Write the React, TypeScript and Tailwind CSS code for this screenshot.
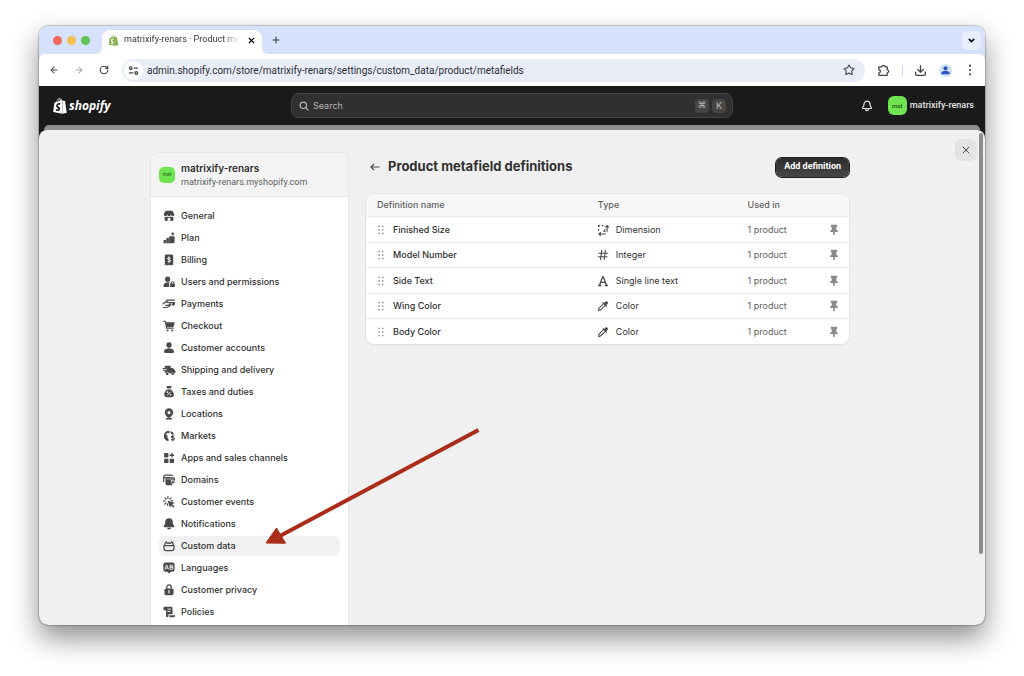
import type { ReactNode } from 'react';
import { ArrowLeft, ArrowRight, ChevronDown, Download, Plus, RotateCw, Star, X } from 'lucide-react';
import { FaShopify } from 'react-icons/fa6';

/* ---------- Icons ---------- */

interface GlyphProps {
  children: ReactNode;
  className?: string;
}

function Glyph({ children, className = 'text-[#4a4a4a]' }: GlyphProps) {
  return (
    <svg viewBox="0 0 20 20" fill="currentColor" aria-hidden="true" className={`size-[14px] shrink-0 ${className}`}>
      {children}
    </svg>
  );
}

const navItems: { label: string; icon: ReactNode }[] = [
  {
    label: 'General',
    icon: (
      <>
        <path d="M5.2 2.500h9.600l2.700 4.700v.8a2.300 2.300 0 0 1-4.700 0 2.200 2.200 0 0 1-1.100 1.600 2.400 2.400 0 0 1-3.200 0 2.200 2.200 0 0 1-1.100-1.600A2.300 2.300 0 0 1 2.500 8v-.8z" />
        <path d="M3.700 11.400c1.400.3 2.800 0 3.700-.7 1.500 1.200 3.700 1.200 5.200 0 .9.700 2.300 1 3.700.7V15a2.300 2.300 0 0 1-2.300 2.300h-2v-2.800a2 2 0 0 0-4 0v2.800H6A2.300 2.300 0 0 1 3.700 15z" />
      </>
    ),
  },
  {
    label: 'Plan',
    icon: (
      <>
        <path d="M2 14.500a1.500 1.500 0 0 1 1.500-1.500H6v-1.500a1.500 1.500 0 0 1 1.500-1.500H10V9a1.500 1.500 0 0 1 1.500-1.500H17a1 1 0 0 1 1 1v7a2 2 0 0 1-2 2H3.500A1.500 1.500 0 0 1 2 16z" />
        <path d="M15.400 1.500l2.600 3h-1.700V6.500h-1.800v-2h-1.700z" />
        <path d="M6.400 13v4.500M10.400 10v7.500" stroke="white" strokeWidth=".4" />
      </>
    ),
  },
  {
    label: 'Billing',
    icon: (
      <>
        <path d="M4 4a2 2 0 0 1 2-2h8a2 2 0 0 1 2 2v14l-2-1.200-2 1.200-2-1.200L8 18l-2-1.200L4 18z" />
        <path d="M12.200 7.600c-.5-.8-1.200-1-2.200-1-1.300 0-2 .6-2 1.400 0 2.100 4.300.9 4.300 3.100 0 .9-.9 1.500-2.200 1.500-1.200 0-2-.4-2.400-1.200M10 5v9.200" fill="none" stroke="white" strokeWidth="1.300" />
      </>
    ),
  },
  {
    label: 'Users and permissions',
    icon: (
      <>
        <circle cx="8" cy="6" r="3.700" />
        <path d="M2 15.500c.4-3.300 2.900-5 6-5 1 0 2 .2 2.800.6-.5.700-.8 1.300-.8 2.100V17H3c-.6 0-1.100-.5-1-1.500z" />
        <path d="M12.900 12.500v-1a2 2 0 0 1 4 0v1" fill="none" stroke="currentColor" strokeWidth="1.500" />
        <rect x="11.300" y="12.200" width="7.200" height="5" rx="1.200" />
      </>
    ),
  },
  {
    label: 'Payments',
    icon: (
      <>
        <path d="M6.500 3.500H17.500a1 1 0 0 1 1 1V5.500H5zM4.300 7H18.500v3.500a1.500 1.500 0 0 1-1.500 1.500h-3.700l1.800-3H9z" />
        <path d="M1.500 9.700C4 7.700 5 6.700 7.500 6.700M1.700 15h4.800c3 0 4.500-1.800 6-4.300M5.200 12h3.300c1.500 0 2.300-.8 3.200-2.300" fill="none" stroke="currentColor" strokeWidth="1.700" strokeLinecap="round" />
      </>
    ),
  },
  {
    label: 'Checkout',
    icon: (
      <>
        <path d="M2 3.200h2c.6 0 .9.3 1 .9l1.500 9h9.300" fill="none" stroke="currentColor" strokeWidth="1.700" strokeLinecap="round" />
        <path d="M5.300 4.600h12c.5 0 .8.400.7.900l-1.200 5c-.1.600-.6 1-1.200 1H6.400z" />
        <circle cx="8" cy="16.500" r="1.400" />
        <circle cx="14.500" cy="16.500" r="1.400" />
      </>
    ),
  },
  {
    label: 'Customer accounts',
    icon: (
      <>
        <circle cx="10" cy="5.700" r="3.800" />
        <path d="M2.900 14.700c.9-2.900 3.600-4.200 7.100-4.200s6.200 1.300 7.100 4.200c.3 1.200-.4 2.300-1.600 2.300h-11c-1.200 0-1.900-1.100-1.600-2.300z" />
      </>
    ),
  },
  {
    label: 'Shipping and delivery',
    icon: (
      <>
        <path d="M4 4h7.500a1 1 0 0 1 1 1v2h2.400c.7 0 1.200.3 1.500.9l.8 1.700 1 .5c.6.3 1 .8 1 1.500v1.800c0 .7-.5 1.200-1.200 1.200h-.4a2.500 2.500 0 0 0-4.600 0H9.800a2.500 2.500 0 0 0-4.900-.2L4 14v-3H1.500V9.800H7V8.500H1V7.200h3z" />
        <circle cx="7.300" cy="15.200" r="1.900" />
        <circle cx="15.300" cy="15.200" r="1.900" />
      </>
    ),
  },
  {
    label: 'Taxes and duties',
    icon: (
      <>
        <path d="M7 1.500h6c.5 0 .8.500.6.900L12.500 5h-5L6.400 2.400c-.2-.4.1-.9.6-.9zM7.500 6.300h5c2.700 1.800 4.500 4.700 4.500 7.700a3.500 3.500 0 0 1-3.500 3.500h-7A3.500 3.500 0 0 1 3 14c0-3 1.800-5.900 4.500-7.700z" />
        <path d="M12.500 9.500l-5 5.200" fill="none" stroke="white" strokeWidth="1.400" />
        <circle cx="7.800" cy="10.200" r="1.100" fill="white" />
        <circle cx="12.200" cy="14" r="1.100" fill="white" />
      </>
    ),
  },
  {
    label: 'Locations',
    icon: (
      <>
        <path fillRule="evenodd" d="M10 1.800a6 6 0 0 1 6 6c0 3.200-2.300 4.800-4.500 7.500h-3C6.300 12.600 4 11 4 7.800a6 6 0 0 1 6-6zm0 3.800a2.300 2.300 0 1 0 0 4.600 2.300 2.300 0 0 0 0-4.600z" />
        <rect x="5.500" y="15.800" width="9" height="2" rx="1" />
      </>
    ),
  },
  {
    label: 'Markets',
    icon: (
      <>
        <path d="M10.500 2.500a7.500 7.500 0 1 0-.8 15c-.7-1-.9-2.200-.4-3.300L7.500 12 8 9.500 5.500 8 8 5.500l2.500.8z" />
        <path d="M12 2.700A7.500 7.500 0 0 1 17.300 8h-2.800L12.300 6z" />
        <path d="M17.300 10.800c-.5-.7-1.200-.9-2-.9-1.200 0-1.900.5-1.900 1.400 0 2 4.300 1 4.300 3 0 1-.9 1.500-2.200 1.500-1.100 0-1.900-.4-2.300-1.100M15.400 8.600v8.900" fill="none" stroke="currentColor" strokeWidth="1.500" />
      </>
    ),
  },
  {
    label: 'Apps and sales channels',
    icon: (
      <>
        <rect x="3" y="3" width="6.200" height="6.200" rx="1.300" />
        <rect x="3" y="11" width="6.200" height="6.200" rx="1.300" />
        <rect x="11" y="11" width="6.200" height="6.200" rx="1.300" />
        <path d="M14.100 2.800v6.600M10.800 6.100h6.600" fill="none" stroke="currentColor" strokeWidth="1.900" />
      </>
    ),
  },
  {
    label: 'Domains',
    icon: (
      <>
        <path d="M2.500 13V5A2 2 0 0 1 4.500 3H13.500a2 2 0 0 1 2 1.500M2.200 6.500h10" fill="none" stroke="currentColor" strokeWidth="1.700" />
        <path d="M5 8A2 2 0 0 1 7 6H16.500a2 2 0 0 1 2 2v3.200l-6-1.700 2 8H7a2 2 0 0 1-2-2z" />
        <path d="M13.500 10.800l5.500 2-2.400 1-1.100 2.700z" />
        <path d="M6.500 8.600H17" stroke="white" strokeWidth=".8" />
      </>
    ),
  },
  {
    label: 'Customer events',
    icon: (
      <>
        <path d="M8.500 2v3M4 4l1.900 1.900M13 4l-1.900 1.900M1.700 8.600h3M4 13.200l1.900-1.900M8 12.500V15M13 8.300h2.300" fill="none" stroke="currentColor" strokeWidth="1.700" strokeLinecap="round" />
        <path d="M8 8l10 3.500-3.400 1.900 3.200 3.200-1.600 1.600-3.200-3.200L11.300 18z" />
      </>
    ),
  },
  {
    label: 'Notifications',
    icon: (
      <>
        <path d="M10 1.800a5.400 5.400 0 0 1 5.400 5.400c0 2.400.5 3.600 1.800 5 .9 1 .4 2.500-.9 2.500H3.700c-1.300 0-1.800-1.500-.9-2.500 1.300-1.400 1.800-2.600 1.800-5A5.400 5.400 0 0 1 10 1.800z" />
        <path d="M7.300 15.500h5.400a2.700 2.500 0 0 1-5.400 0z" />
      </>
    ),
  },
  {
    label: 'Custom data',
    icon: (
      <path
        d="M2.800 9.500h14.400v3.700a3.300 3.300 0 0 1-3.300 3.300H6.100a3.300 3.300 0 0 1-3.300-3.300zM3.200 9.200l1.900-4c.3-.6.8-1 1.500-1 .3 2.800 2.700 2.600 3.400.8.7 1.800 3.100 2 3.400-.8.7 0 1.200.4 1.500 1l1.900 4"
        fill="none"
        stroke="currentColor"
        strokeWidth="1.700"
        strokeLinejoin="round"
      />
    ),
  },
  {
    label: 'Languages',
    icon: (
      <>
        <path d="M2 5a3 3 0 0 1 3-3h10a3 3 0 0 1 3 3v7.500a3 3 0 0 1-3 3h-2.500L10 18l-2.500-2.500H5a3 3 0 0 1-3-3z" />
        <path d="M4.300 12l2.100-6.200h.6l2.100 6.200M5.200 10.200h3M11.500 5.900h2.600a1.400 1.400 0 0 1 0 2.900h-2.600zM11.500 8.800h2.900a1.500 1.500 0 0 1 0 3h-2.900z" fill="none" stroke="white" strokeWidth="1.200" />
      </>
    ),
  },
  {
    label: 'Customer privacy',
    icon: (
      <>
        <path d="M6.800 8.500V6a3.200 3.200 0 0 1 6.400 0v2.500" fill="none" stroke="currentColor" strokeWidth="1.800" />
        <rect x="3.500" y="7.800" width="13" height="9.700" rx="2.500" />
        <path d="M10 10.800v3.400" stroke="white" strokeWidth="1.600" strokeLinecap="round" />
      </>
    ),
  },
  {
    label: 'Policies',
    icon: (
      <>
        <path d="M2 4.500a2 2 0 0 1 2-2H13a2 2 0 0 1 2 2v8.700H9.300v2.600c0 .9-.5 1.700-1.500 1.700-1.400 0-2-.9-2-2.200V7.500H3a1 1 0 0 1-1-1z" />
        <path d="M10.700 14.500h7.800v.8a2.200 2.200 0 0 1-2.200 2.200h-5.600z" />
        <path d="M7.800 6h5M7.800 9.200h4" stroke="white" strokeWidth="1.300" />
      </>
    ),
  },
];

const typeIcons = {
  Dimension: (
    <path
      d="M3.700 6V3.700H6M8.300 3.700h2.400M3.700 8.500v2.400M12.500 9v3h-2M15.800 12.500V4M13.300 6.300l2.500-2.600 2.500 2.600M5 15.700h9M6.800 13.200l-2.500 2.500 2.500 2.500"
      fill="none"
      stroke="currentColor"
      strokeWidth="1.700"
    />
  ),
  Integer: <path d="M8.300 3.500l-1.800 13M13.500 3.500l-1.800 13M4.200 7.500h12.600M3.200 12.500h12.600" fill="none" stroke="currentColor" strokeWidth="1.600" strokeLinecap="round" />,
  'Single line text': (
    <path d="M5 16.200L9.500 4h1L15 16.200M6.500 12h7M3 16.400h4.500M12.500 16.400H17" fill="none" stroke="currentColor" strokeWidth="1.900" />
  ),
  Color: (
    <>
      <path d="M10.500 7L4.700 12.800c-.5.500-.7 1-.7 1.700L3.700 16.300l1.800-.3c.7 0 1.200-.2 1.700-.7L13 9.500" fill="none" stroke="currentColor" strokeWidth="1.600" strokeLinejoin="round" />
      <path d="M9 5.500l1.100-1.100 1.400 1.200 1.500-1.500c1.100-1.100 2.400-1.100 3.400-.1 1 .9 1 2.200 0 3.200l-1.700 1.700 1.300 1.400-1.200 1.200z" />
    </>
  ),
};

type FieldType = keyof typeof typeIcons;

const definitions: { name: string; type: FieldType; usedIn: string }[] = [
  { name: 'Finished Size', type: 'Dimension', usedIn: '1 product' },
  { name: 'Model Number', type: 'Integer', usedIn: '1 product' },
  { name: 'Side Text', type: 'Single line text', usedIn: '1 product' },
  { name: 'Wing Color', type: 'Color', usedIn: '1 product' },
  { name: 'Body Color', type: 'Color', usedIn: '1 product' },
];

/* ---------- Browser chrome ---------- */

function TabStrip() {
  return (
    <div className="flex h-7 shrink-0 items-end bg-[#d6e2fb] pr-1">
      <div className="flex items-center gap-[5px] self-center pl-[14px]">
        <span className="size-[9px] rounded-full bg-[#ed6a5e]" />
        <span className="size-[9px] rounded-full bg-[#f4bf4f]" />
        <span className="size-[9px] rounded-full bg-[#61c554]" />
      </div>
      <div className="relative ml-3 flex h-6 w-40 items-center rounded-t-lg bg-white pb-1 pl-[6px] pr-[6px]">
        <svg viewBox="0 0 6 6" aria-hidden="true" className="absolute bottom-0 -left-[6px] size-[6px] fill-white">
          <path d="M6 0v6H0a6 6 0 0 0 6-6z" />
        </svg>
        <svg viewBox="0 0 6 6" aria-hidden="true" className="absolute bottom-0 -right-[6px] size-[6px] fill-white">
          <path d="M0 0v6h6a6 6 0 0 1-6-6z" />
        </svg>
        <FaShopify className="size-[11px] shrink-0 text-[#7fae42]" />
        <span className="ml-[5px] w-[115px] whitespace-nowrap bg-linear-to-r from-[#303134] from-85% to-white bg-clip-text font-['Roboto',sans-serif] text-[9px] text-transparent">
          matrixify-renars · Product me
        </span>
        <button type="button" aria-label="Close tab" className="ml-auto flex size-[10px] items-center justify-center">
          <X className="size-[9px] shrink-0" strokeWidth={3} />
        </button>
      </div>
      <button type="button" aria-label="New tab" className="ml-[9px] flex size-[10px] items-center justify-center self-center">
        <Plus className="size-[10px] shrink-0 text-[#33373d]" strokeWidth={2.5} />
      </button>
      <button type="button" aria-label="Search tabs" className="ml-auto flex size-[19px] items-center justify-center self-center rounded-md bg-[#e8effc]">
        <ChevronDown className="size-[9px]" strokeWidth={4} />
      </button>
    </div>
  );
}

function Toolbar() {
  return (
    <div className="bg-[#d6e2fb]">
      <div className="flex h-8 items-center rounded-t-md bg-white pr-[9px] pl-[10px] text-[#43474e]">
        <div className="flex items-center gap-[15px]">
          <button type="button" aria-label="Back">
            <ArrowLeft className="size-[10px]" strokeWidth={2.5} />
          </button>
          <button type="button" aria-label="Forward">
            <ArrowRight className="size-[10px] text-[#a5a7ab]" strokeWidth={2.5} />
          </button>
          <button type="button" aria-label="Reload">
            <RotateCw className="size-[10px]" strokeWidth={2.8} />
          </button>
        </div>
        <div className="ml-[13px] flex h-[23px] flex-1 items-center rounded-full bg-[#e9edf7] pr-[10px] pl-[2px]">
          <button type="button" aria-label="Site information" className="flex size-[19px] items-center justify-center rounded-full bg-white">
            <svg viewBox="0 0 12 12" aria-hidden="true" className="size-[11px] fill-none stroke-current stroke-[1.4]">
              <circle cx="3" cy="3.500" r="1.400" />
              <path d="M6.200 3.500H11M1 8.700h4.800" />
              <circle cx="9" cy="8.700" r="1.400" />
            </svg>
          </button>
          <input
            type="text"
            aria-label="Address"
            defaultValue="admin.shopify.com/store/matrixify-renars/settings/custom_data/product/metafields"
            className="ml-[4px] min-w-0 flex-1 bg-transparent font-['Roboto',sans-serif] text-[10px] text-[#2b2e33] outline-none"
          />
          <button type="button" aria-label="Bookmark">
            <Star className="size-3" strokeWidth={2.2} />
          </button>
        </div>
        <button type="button" aria-label="Extensions" className="ml-3">
          <svg viewBox="0 0 14 14" aria-hidden="true" className="size-[13px] fill-none stroke-current stroke-[1.4]">
            <path d="M2 3h3.300a1.700 1.600 0 0 1 3.400 0H11v3.300a1.600 1.600 0 0 1 0 3.200v2.700H2V9.600a1.700 1.700 0 0 0 0-3.400z" strokeLinejoin="round" />
          </svg>
        </button>
        <span className="ml-3 h-[11px] w-px bg-[#c5d7fa]" />
        <button type="button" aria-label="Downloads" className="ml-[11px]">
          <Download className="size-[13px]" strokeWidth={2.5} />
        </button>
        <button type="button" aria-label="Profile" className="ml-3 flex size-[13px] items-center justify-center rounded-full bg-[#d3e0fb]">
          <svg viewBox="0 0 12 12" aria-hidden="true" className="size-[11px] fill-[#2856c5]">
            <circle cx="6" cy="3.600" r="2.200" />
            <path d="M1.500 10V9c0-1.600 2-2.600 4.500-2.600s4.500 1 4.500 2.600v1z" />
          </svg>
        </button>
        <button type="button" aria-label="Menu" className="ml-3">
          <svg viewBox="0 0 12 12" aria-hidden="true" className="size-3 fill-current">
            <circle cx="6" cy="1.700" r="1.100" />
            <circle cx="6" cy="6" r="1.100" />
            <circle cx="6" cy="10.300" r="1.100" />
          </svg>
        </button>
      </div>
    </div>
  );
}

/* ---------- Shopify admin ---------- */

function StoreBadge({ className }: { className: string }) {
  return (
    <span className={`flex shrink-0 items-center justify-center bg-[#70e350] text-[#1c5a10] ${className}`}>mat</span>
  );
}

function AdminBar() {
  return (
    <header className="grid h-[39px] grid-cols-[1fr_minmax(0,442px)_1fr] items-center">
      <a href="#" className="flex items-center gap-[1px] pl-[13px] text-white">
        <FaShopify className="size-[16px]" />
        <span className="font-['Open_Sans',sans-serif] text-[12px] font-bold italic">shopify</span>
      </a>
      <label className="flex h-[25px] items-center rounded-lg border border-[#454545] bg-[#303030] pr-[6px] pl-[7px]">
        <svg viewBox="0 0 10 10" aria-hidden="true" className="size-[10px] fill-none stroke-[#b5b5b5] stroke-[1.2]">
          <circle cx="4.300" cy="4.300" r="3.200" />
          <path d="M6.700 6.700L9 9" strokeLinecap="round" />
        </svg>
        <input
          type="search"
          aria-label="Search"
          placeholder="Search"
          className="ml-1 min-w-0 flex-1 bg-transparent text-[9px] text-white outline-none placeholder:text-[#b5b5b5]"
        />
        <kbd className="flex size-[14px] items-center justify-center rounded bg-[#454545] font-['DejaVu_Sans',sans-serif] text-[9px] text-[#b5b5b5]">⌘</kbd>
        <kbd className="ml-[3px] flex size-[14px] items-center justify-center rounded bg-[#454545] font-['Inter',sans-serif] text-[9px] font-medium text-[#b5b5b5]">K</kbd>
      </label>
      <div className="flex items-center justify-end pr-[11px]">
        <button type="button" aria-label="Notifications" className="mr-[15px] text-[#e3e3e3]">
          <svg viewBox="0 0 12 12" aria-hidden="true" className="size-3 fill-none stroke-current stroke-[1.2]">
            <path d="M6 1.200a3 3 0 0 1 3 3c0 1.600.4 2.300 1.300 3.200.5.500.2 1.100-.4 1.100H2.100c-.6 0-.9-.6-.4-1.100C2.600 6.500 3 5.800 3 4.200a3 3 0 0 1 3-3z" />
            <path d="M4.600 8.700c0 2.600 2.800 2.600 2.800 0" />
          </svg>
        </button>
        <button type="button" className="flex items-center gap-[3px] font-['Roboto',sans-serif] text-[9px] font-medium text-[#e3e3e3]">
          <StoreBadge className="size-[19px] rounded-md text-[6px]" />
          matrixify-renars
        </button>
      </div>
    </header>
  );
}

function SettingsNav() {
  return (
    <aside className="w-[197px] shrink-0 self-start overflow-hidden rounded-t-lg bg-white pb-10 shadow-[0_0_0_1px_#e6e6e6]">
      <div className="flex h-11 items-center gap-[6px] border-b border-[#e3e3e3] bg-[#f3f3f3] pl-2">
        <StoreBadge className="size-4 rounded-[5px] text-[5px]" />
        <div>
          <p className="text-[10px] leading-[14px] font-semibold text-[#303030]">matrixify-renars</p>
          <p className="font-['Roboto',sans-serif] text-[9px] leading-[14px] text-[#616161]">matrixify-renars.myshopify.com</p>
        </div>
      </div>
      <nav className="px-2 py-[9px]">
        <ul className="flex flex-col gap-[2px]">
          {navItems.map(({ label, icon }) => (
            <li key={label}>
              <a
                href="#"
                aria-current={label === 'Custom data' ? 'page' : undefined}
                className="flex h-5 items-center gap-[5px] rounded-md pl-[3px] text-[9px] font-medium text-[#303030] aria-[current=page]:bg-[#f1f1f1]"
              >
                <Glyph>{icon}</Glyph>
                {label}
              </a>
            </li>
          ))}
        </ul>
      </nav>
    </aside>
  );
}

function DefinitionsTable() {
  return (
    <div className="overflow-hidden rounded-lg bg-white shadow-[0_0_0_1px_#e3e3e3,0_1px_1px_#cccccc]">
      <table className="w-full table-fixed border-separate border-spacing-0 text-left text-[9px]">
        <thead className="bg-[#f7f7f7] text-[#616161]">
          <tr className="h-[22px]">
            <th className="w-[48%] pl-[11px] font-medium">Definition name</th>
            <th className="w-[31%] font-medium">Type</th>
            <th className="font-medium">Used in</th>
            <th className="w-[22px]" aria-label="Pinned" />
          </tr>
        </thead>
        <tbody>
          {definitions.map(({ name, type, usedIn }) => (
            <tr key={name} className="odd:h-[26px] even:h-[25px] *:border-t *:border-[#ebebeb]">
              <td className="pl-2 font-medium text-[#303030]">
                <div className="flex items-center gap-[5px]">
                  <Glyph className="text-[#8a8a8a]">
                    <path d="M6.200 4h2v2h-2zM11.500 4h2v2h-2zM6.200 9h2v2h-2zM11.500 9h2v2h-2zM6.200 14h2v2h-2zM11.500 14h2v2h-2z" />
                  </Glyph>
                  {name}
                </div>
              </td>
              <td className="text-[#303030]">
                <div className="-ml-[2px] flex items-center gap-[6px]">
                  <Glyph>{typeIcons[type]}</Glyph>
                  {type}
                </div>
              </td>
              <td className="text-[#616161]">{usedIn}</td>
              <td>
                <button type="button" aria-label={`Unpin ${name}`} className="block">
                  <Glyph className="text-[#8a8a8a]">
                    <path d="M5.500 2.500h9v2.800l-1.200.9v3.500c1.500.5 2.300 1.400 2.300 3.300H4.400c0-1.900.8-2.800 2.300-3.300V6.200l-1.200-.9zM8.800 12.700h2.400v3.800L10 18l-1.200-1.500z" />
                  </Glyph>
                </button>
              </td>
            </tr>
          ))}
        </tbody>
      </table>
    </div>
  );
}

function Annotation() {
  return (
    <svg viewBox="0 0 218 120" aria-hidden="true" className="pointer-events-none absolute top-[297px] left-[225px] h-[120px] w-[218px]">
      <path d="M214.500 3L14 110" stroke="#a92d19" strokeWidth="4" />
      <path d="M2 116L12.500 101 21.500 116.200z" fill="#a92d19" stroke="#a92d19" />
    </svg>
  );
}

export default function App() {
  return (
    <div className="flex h-screen overflow-hidden bg-white px-[39px] pt-[26px] pb-[51px] font-['Inter',sans-serif]">
      <div className="flex min-w-0 flex-1 flex-col overflow-hidden rounded-[9px] shadow-[0_0_1px_1px_rgba(0,0,0,0.2),0_13px_28px_rgba(0,0,0,0.45)]">
        <TabStrip />
        <Toolbar />
        <div className="flex min-h-0 flex-1 flex-col bg-[#1a1a1a]">
          <AdminBar />
          <div className="mx-[5px] h-[5px] shrink-0 rounded-t-[5px] bg-[#8f8f8f]" />
          <div className="relative flex min-h-0 flex-1 overflow-hidden rounded-t-lg bg-[#f0f0f0]">
            <div className="flex min-w-0 flex-1 justify-center pt-[23px] pl-[6px]">
              <div className="flex w-full max-w-[698px] gap-[18px]">
                <SettingsNav />
                <main className="min-w-0 flex-1 pt-1">
                  <div className="mb-[17px] flex h-5 items-center">
                    <button type="button" aria-label="Back to custom data" className="mr-[6px] ml-[2px]">
                      <Glyph>
                        <path d="M16 10H4.500M8.300 6L4.300 10l4 4" fill="none" stroke="currentColor" strokeWidth="1.700" strokeLinecap="round" strokeLinejoin="round" />
                      </Glyph>
                    </button>
                    <h1 className="text-[13px] font-bold text-[#303030]">Product metafield definitions</h1>
                    <button
                      type="button"
                      className="ml-auto h-[19px] rounded-md bg-linear-to-b from-[#2b2b2b] to-[#474747] px-2 font-['Roboto',sans-serif] text-[9px] font-bold text-white shadow-[0_0_0_1px_#1f1f1f]"
                    >
                      Add definition
                    </button>
                  </div>
                  <DefinitionsTable />
                </main>
              </div>
            </div>
            <button type="button" aria-label="Close settings" className="mt-[9px] flex size-[22px] shrink-0 items-center justify-center rounded-md bg-[#e3e3e3]">
              <X className="size-3 text-[#4a4a4a]" strokeWidth={2} />
            </button>
            <div className="mt-[3px] mr-[2px] ml-[2px] h-[85%] w-1 shrink-0 rounded-full bg-[#8c8c8c]" />
            <Annotation />
          </div>
        </div>
      </div>
    </div>
  );
}
